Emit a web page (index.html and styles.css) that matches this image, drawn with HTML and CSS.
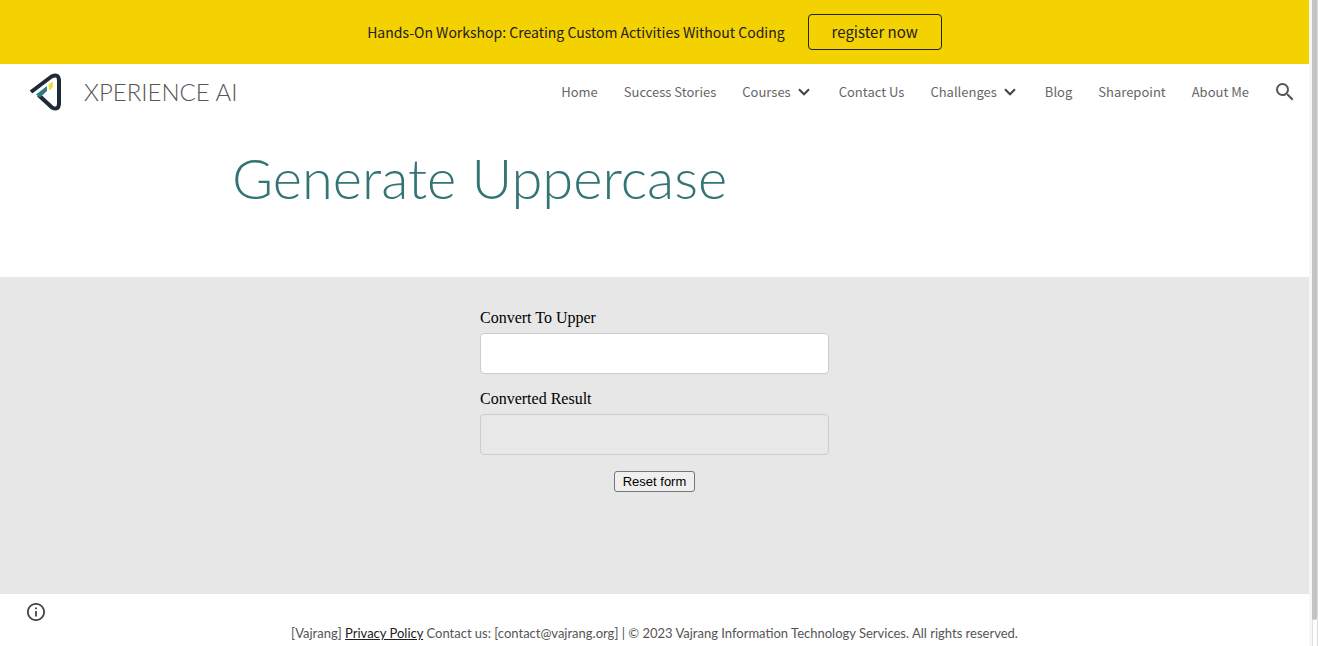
FILE: index.html
```html
<!DOCTYPE html>
<html lang="en">
<head>
<meta charset="utf-8">
<meta name="viewport" content="width=device-width, initial-scale=1">
<title>Generate Uppercase - XPERIENCE AI</title>
<link rel="stylesheet" href="styles.css">
</head>
<body>
<div class="page">
  <div class="banner">
    <span class="banner-text">Hands-On Workshop: Creating Custom Activities Without Coding</span>
    <a class="banner-button" href="#register">register now</a>
  </div>

  <header class="header">
    <a class="brand" href="#home">
      <svg class="brand-logo" viewBox="0 0 34 40" fill="none" aria-hidden="true">
        <path d="M2 20 22.500 4.500Q30 1 30 9V31Q30 39 23 35.500L9.500 23" stroke="#1c2a3a" stroke-width="4" stroke-linejoin="round"/>
        <path d="M7 22.500 18 14V19L11 25.500Z" fill="#317a7c"/>
        <path d="M19.500 12.500 24 9.500V14.500L21.500 18H20Z" fill="#ecdf45"/>
      </svg>
      <span class="brand-name">XPERIENCE AI</span>
    </a>
    <nav class="nav" aria-label="Main">
      <a href="#home">Home</a>
      <a href="#stories">Success Stories</a>
      <a class="has-menu" href="#courses">Courses
        <svg class="chevron" viewBox="0 0 12 8" aria-hidden="true"><path d="M1 1.200 6 6.300 11 1.200"/></svg>
      </a>
      <a href="#contact">Contact Us</a>
      <a class="has-menu" href="#challenges">Challenges
        <svg class="chevron" viewBox="0 0 12 8" aria-hidden="true"><path d="M1 1.200 6 6.300 11 1.200"/></svg>
      </a>
      <a href="#blog">Blog</a>
      <a href="#sharepoint">Sharepoint</a>
      <a href="#about">About Me</a>
      <button class="icon-button search" type="button" aria-label="Search">
        <svg class="search-icon" viewBox="3 3 18 18" aria-hidden="true"><path d="M15.500 14h-.79l-.28-.27A6.471 6.471 0 0 0 16 9.500 6.500 6.500 0 1 0 9.500 16c1.610 0 3.090-.59 4.230-1.570l.27.280v.79l5 4.990L20.490 19l-4.990-5zm-6 0C7.010 14 5 11.990 5 9.500S7.010 5 9.500 5 14 7.010 14 9.500 11.990 14 9.500 14z"/></svg>
      </button>
    </nav>
  </header>

  <main>
    <section class="hero">
      <h1>Generate Uppercase</h1>
    </section>
    <section class="tool">
      <form class="form">
        <label for="source">Convert To Upper</label>
        <input id="source" type="text">
        <label for="result">Converted Result</label>
        <input id="result" type="text" readonly>
        <button class="reset" type="reset">Reset form</button>
      </form>
    </section>
  </main>

  <footer class="footer">
    <button class="icon-button info" type="button" aria-label="Page details">
      <svg class="info-icon" viewBox="2 2 20 20" aria-hidden="true"><path d="M11 17h2v-6h-2v6zm1-15C6.480 2 2 6.480 2 12s4.480 10 10 10 10-4.480 10-10S17.520 2 12 2zm0 18c-4.410 0-8-3.590-8-8s3.590-8 8-8 8 3.590 8 8-3.590 8-8 8zM11 9h2V7h-2v2z"/></svg>
    </button>
    <p>[Vajrang] <a href="#privacy">Privacy Policy</a> Contact us: [contact@vajrang.org] | © 2023 Vajrang Information Technology Services. All rights reserved.</p>
  </footer>
</div>
<div class="scroll-track" aria-hidden="true"><div class="scroll-thumb"></div></div>
</body>
</html>
```

FILE: styles.css
```css
* {
  box-sizing: border-box;
}

body {
  margin: 0;
  background: #fff;
  color: #212121;
  font-family: "Noto Sans CJK SC", "Noto Sans", sans-serif;
}

.page {
  display: flex;
  flex-direction: column;
  min-height: 100vh;
  margin-right: 9px;
}

.banner {
  display: flex;
  justify-content: center;
  align-items: center;
  gap: 23px;
  padding: 14px 24px;
  background: #f4d100;
  color: #212121;
  font-size: 15px;
  line-height: 20px;
}

.banner-text {
  font-size: 14px;
}

.banner-button {
  padding: 7px 23px;
  border: 1px solid #212121;
  border-radius: 4px;
  color: inherit;
  text-decoration: none;
}

.header {
  display: flex;
  justify-content: space-between;
  align-items: center;
  padding: 8px 15px 8px 29px;
}

.brand {
  display: flex;
  align-items: center;
  gap: 21px;
  color: #555;
  text-decoration: none;
}

.brand-logo {
  width: 34px;
  height: 40px;
}

.brand-name {
  font-family: Lato, sans-serif;
  font-size: 24px;
  font-weight: 300;
  line-height: 30px;
}

.nav {
  display: flex;
  align-items: center;
  gap: 26px;
  font-size: 13px;
  line-height: 20px;
}

.nav a {
  color: #666;
  text-decoration: none;
  white-space: nowrap;
}

.nav .has-menu {
  display: flex;
  align-items: center;
  gap: 7px;
  padding-right: 3px;
}

.chevron {
  width: 12px;
  height: 8px;
  fill: none;
  stroke: #444;
  stroke-width: 2;
}

.icon-button {
  display: flex;
  padding: 0;
  border: 0;
  background: none;
}

.search {
  margin-left: 1px;
}

.search-icon {
  width: 18px;
  height: 18px;
  fill: #555;
}

.hero {
  width: 100%;
  max-width: 845px;
  margin: 0 auto;
  padding: 24px 0 65px;
}

.hero h1 {
  margin: 0;
  color: #337474;
  font-family: Lato, sans-serif;
  font-size: 56px;
  font-weight: 300;
  line-height: 68px;
}

.tool {
  padding: 32px 24px 102px;
  background: #e7e7e7;
}

.form {
  display: flex;
  flex-direction: column;
  max-width: 349px;
  margin: 0 auto;
  color: #000;
  font-family: "Liberation Serif", serif;
  font-size: 16px;
  line-height: 18px;
}

.form input {
  height: 41px;
  margin: 6px 0 16px;
  padding: 8px;
  border: 1px solid #ccc;
  border-radius: 4px;
  background: #fff;
  font-size: 16px;
}

.form input[readonly] {
  background: #e8e8e8;
}

.reset {
  align-self: center;
  height: 21px;
  padding: 1px 8px;
  border: 1px solid #767676;
  border-radius: 3px;
  background: #efefef;
  color: #000;
  font-family: "Liberation Sans", sans-serif;
  font-size: 13px;
  line-height: 16px;
}

.footer {
  padding: 9px 27px 4px;
  font-family: Lato, sans-serif;
  font-size: 13px;
  line-height: 20px;
  text-align: center;
}

.footer p {
  margin: 2px 0 0;
  color: #555;
}

.footer a {
  color: #212121;
}

.info-icon {
  width: 18px;
  height: 18px;
  fill: #444;
}

.scroll-track {
  position: fixed;
  top: 0;
  right: 0;
  bottom: 0;
  width: 9px;
  border-right: 1px solid #ddd;
  background: linear-gradient(90deg, #f6f6f6 3px, #e0e0e0 3px, #e0e0e0 4px, #fff 4px);
}

.scroll-thumb {
  height: 96%;
  margin-left: 3px;
  border-radius: 0 0 3px 3px;
  background: #c4c4c4;
}
```
